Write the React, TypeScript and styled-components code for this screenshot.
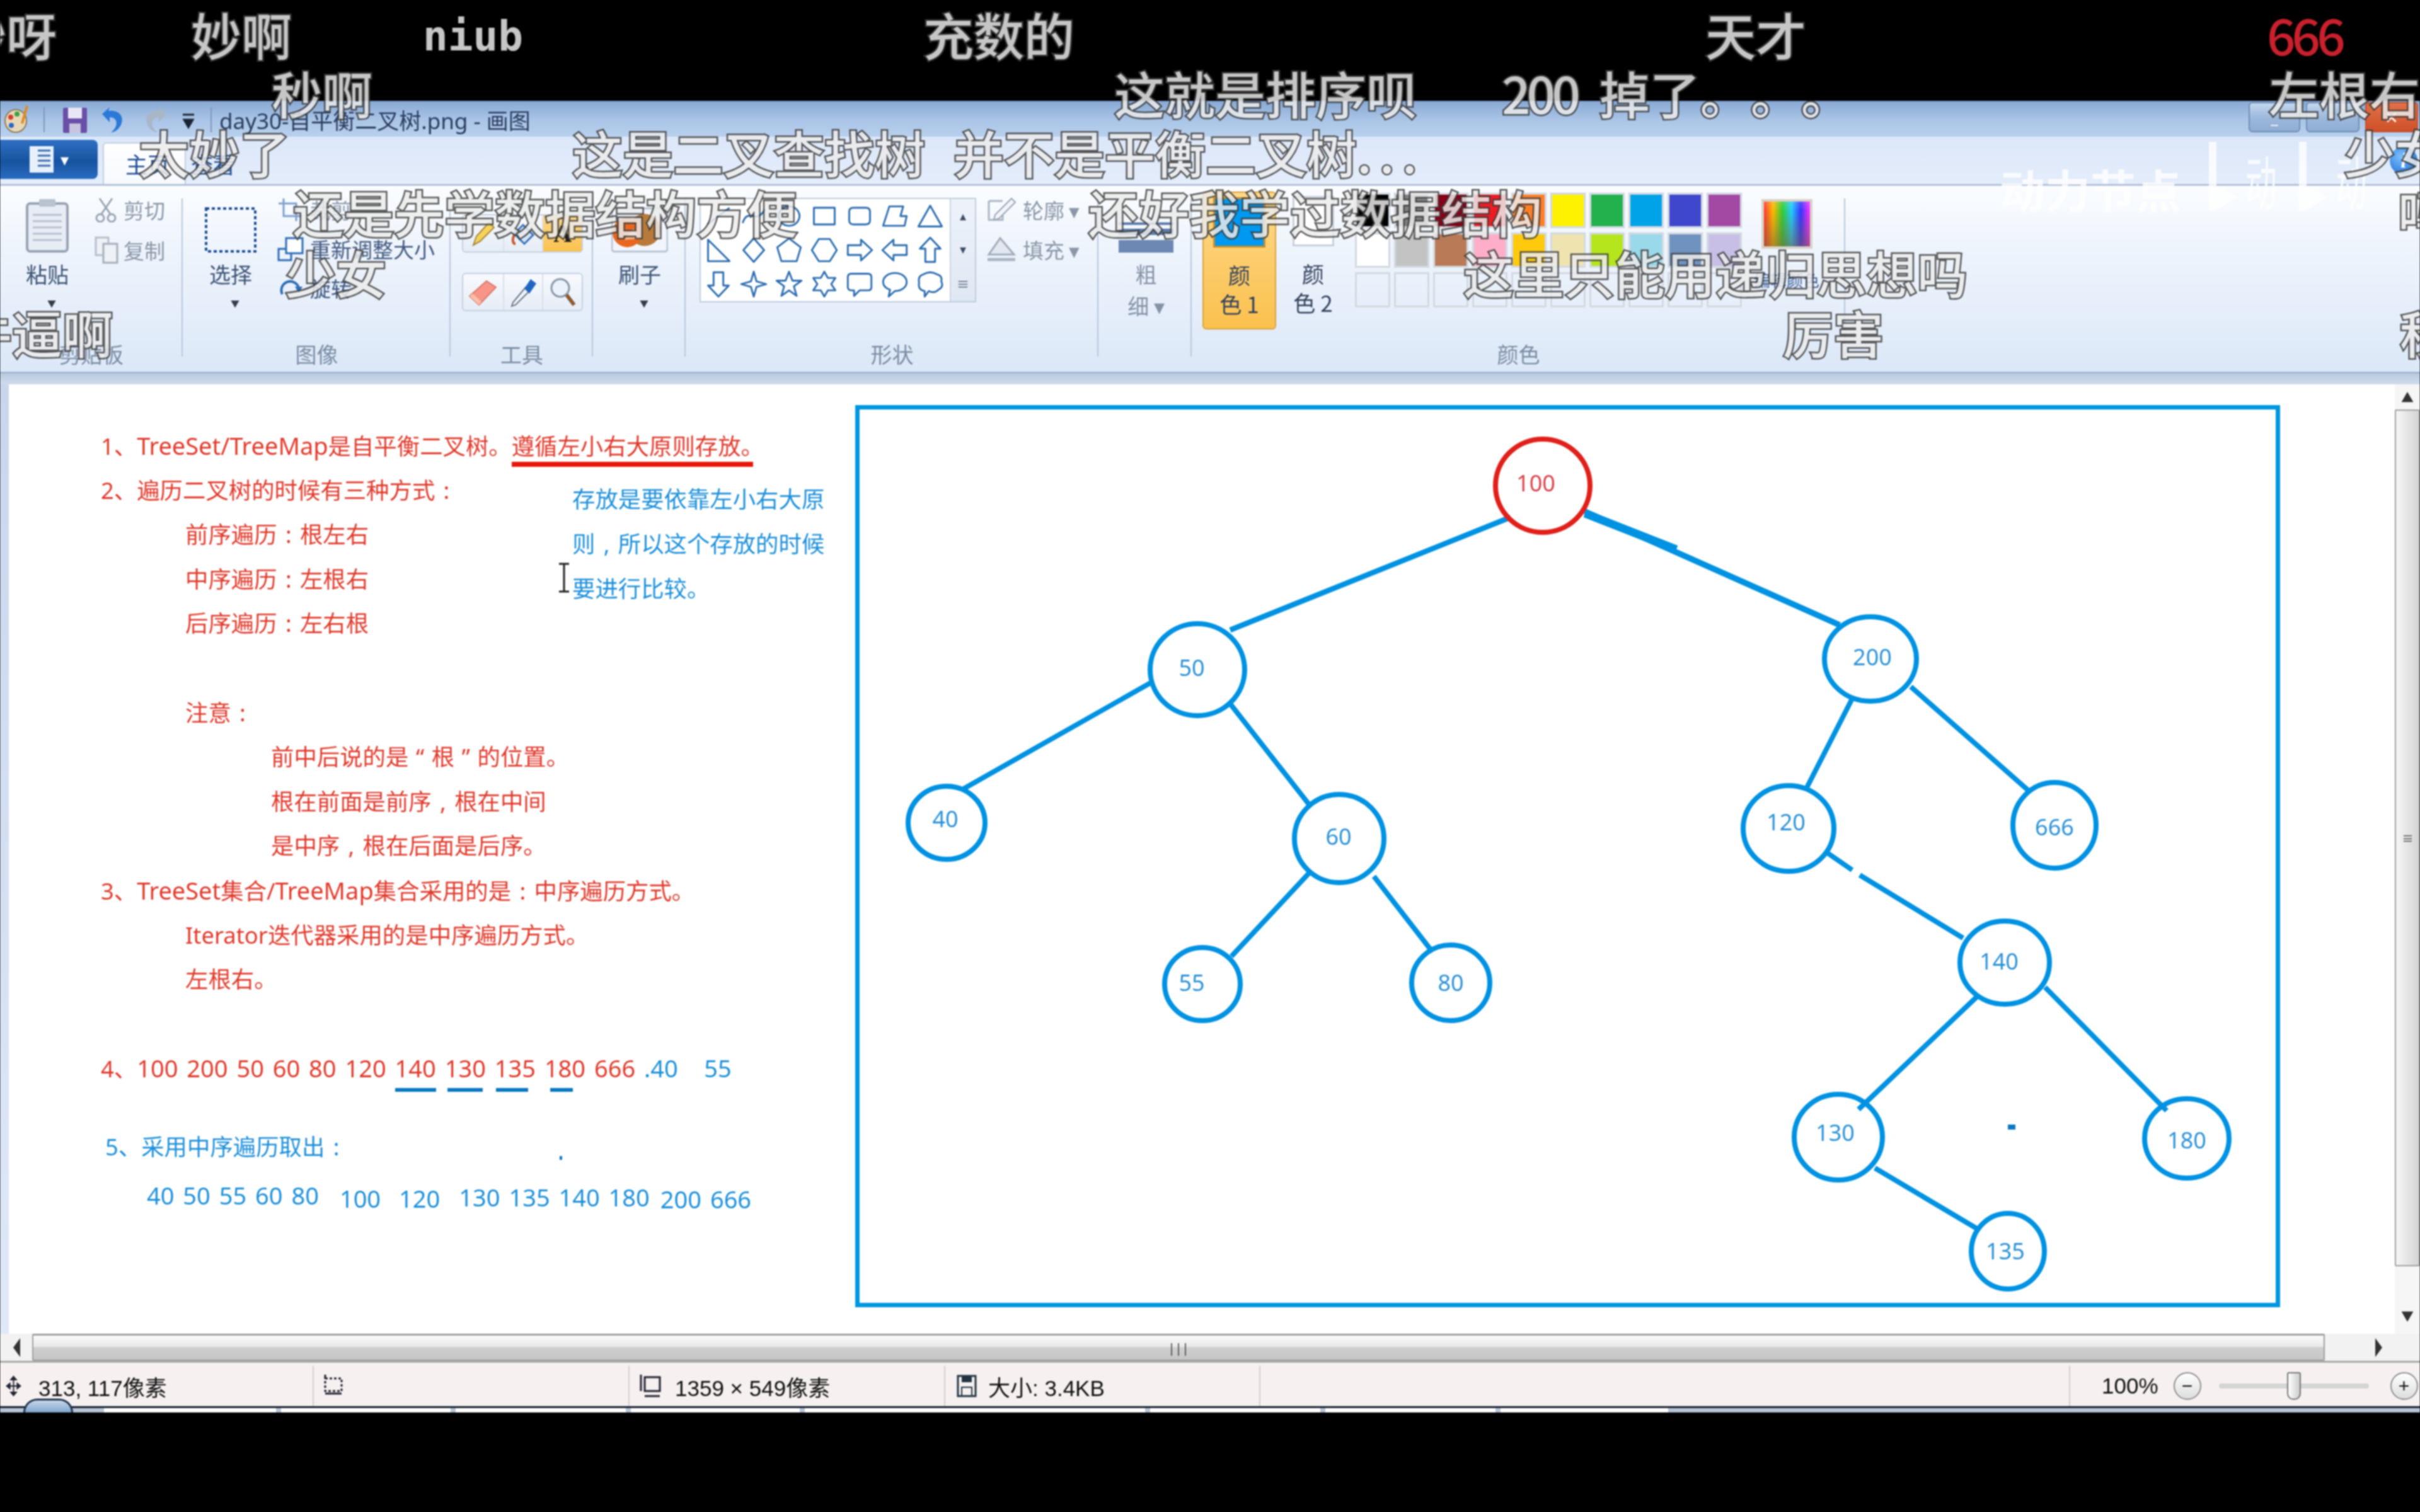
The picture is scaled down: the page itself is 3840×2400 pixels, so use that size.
import React, { ReactNode } from "react";
import styled, { createGlobalStyle } from "styled-components";

const FONT = `"Noto Sans", "Noto Sans CJK SC", sans-serif`;
const CJK = `"Noto Sans CJK SC", sans-serif`;
const BLUE = "#0092e2";
const RED = "#e03a2c";
const NOTE_BLUE = "#1d90da";

const GlobalStyle = createGlobalStyle`
  html, body { margin: 0; padding: 0; background: #000; }
  body { width: 3840px; height: 2400px; overflow: hidden; font-family: ${FONT}; }
`;

const Stage = styled.div`
  position: relative;
  display: flex;
  flex-direction: column;
  width: 3840px;
  height: 2400px;
  overflow: hidden;
  background: #000;
  filter: blur(1.1px);
  text-spacing-trim: space-all;
`;

const TopBand = styled.div`
  height: 160px;
  flex: none;
`;

const Window = styled.div`
  display: flex;
  flex-direction: column;
  flex: none;
`;

/* title bar */
const TitleBar = styled.div`
  display: flex;
  align-items: center;
  height: 57px;
  padding-left: 5px;
  background: linear-gradient(180deg, #8aabd5 0%, #a9c4e6 50%, #b9d1ee 100%);
  border-top: 2px solid #7d9cc6;
  box-sizing: border-box;
`;

const QuickIcon = styled.svg<{ $gap?: number; $width?: number }>`
  flex: none;
  width: ${(p) => p.$width ?? 42}px;
  height: 48px;
  margin-left: ${(p) => p.$gap ?? 0}px;
`;

const TitleDivider = styled.div<{ $gap: number }>`
  width: 2px;
  height: 40px;
  margin-left: ${(p) => p.$gap}px;
  background: #7f97b8;
`;

const TitleText = styled.span`
  margin-left: 12px;
  font-family: ${FONT};
  font-size: 35px;
  color: #2a3d60;
  white-space: nowrap;
`;

const WindowButtons = styled.div`
  display: flex;
  align-self: flex-start;
  gap: 9px;
  margin-left: auto;
  margin-right: 3px;
  margin-top: 0;
`;

const WindowButton = styled.div<{ $width: number; $close?: boolean }>`
  display: flex;
  align-items: center;
  justify-content: center;
  width: ${(p) => p.$width}px;
  height: 48px;
  box-sizing: border-box;
  border: 2px solid ${(p) => (p.$close ? "#c0502e" : "#6f8db5")};
  border-radius: 6px;
  font-size: 26px;
  color: #fff;
  background: ${(p) =>
    p.$close
      ? "linear-gradient(180deg,#e27048,#cf5128)"
      : "linear-gradient(180deg,#c4d8ef,#9db9dc 50%,#8fadd4)"};
`;

/* tab strip */
const TabStrip = styled.div`
  display: flex;
  align-items: flex-end;
  height: 78px;
  background: linear-gradient(180deg, #dce7f9, #e4edfb);
  border-bottom: 3px solid #b4c3d8;
  box-sizing: border-box;
`;

const FileButton = styled.div`
  display: flex;
  align-items: center;
  justify-content: center;
  gap: 10px;
  align-self: flex-start;
  width: 155px;
  height: 62px;
  margin-top: 5px;
  border-radius: 0 8px 8px 0;
  color: #fff;
  font-size: 26px;
  background: linear-gradient(180deg, #2f70c4 0%, #17549f 55%, #2a6cc0 100%);
`;

const HomeTab = styled.div`
  display: flex;
  align-items: center;
  width: 132px;
  height: 66px;
  margin-left: 8px;
  padding-left: 34px;
  box-sizing: border-box;
  border: 2px solid #c3cfdf;
  border-bottom: none;
  border-radius: 6px 6px 0 0;
  background: linear-gradient(180deg, #fff, #f6f9fe);
`;

const TabLabel = styled.span<{ $gap?: number }>`
  margin-left: ${(p) => p.$gap ?? 0}px;
  line-height: 64px;
  font-family: ${CJK};
  font-size: 35px;
  color: #1d4d92;
  white-space: nowrap;
`;

const HelpIcon = styled.div`
  display: flex;
  align-self: center;
  align-items: center;
  justify-content: center;
  width: 44px;
  height: 44px;
  margin-left: auto;
  margin-right: 4px;
  border-radius: 50%;
  background: radial-gradient(circle at 40% 35%, #7cc0ff, #1263d0);
  font-family: "Liberation Serif", serif;
  font-style: italic;
  font-weight: 700;
  font-size: 34px;
  color: #fff;
`;

/* ribbon */
const Ribbon = styled.div`
  display: flex;
  height: 298px;
  box-sizing: border-box;
  background: linear-gradient(180deg, #fbfdff 0%, #eef4fc 35%, #dce8f8 100%);
  border-bottom: 3px solid #a4b7d1;
`;

const RibbonBand = styled.div`
  height: 17px;
  background: linear-gradient(180deg, #bccbdf, #cfdcee);
`;

const Group = styled.div<{ $width: number }>`
  position: relative;
  display: flex;
  flex-direction: column;
  flex: none;
  width: ${(p) => p.$width}px;
  &::after {
    content: "";
    position: absolute;
    top: 20px;
    bottom: 24px;
    right: 0;
    width: 2px;
    background: #b7c7dc;
  }
`;

const GroupBody = styled.div<{ $pad: number }>`
  display: flex;
  align-items: flex-start;
  flex: 1;
  padding-left: ${(p) => p.$pad}px;
  min-height: 0;
`;

const GroupLabel = styled.div`
  height: 40px;
  margin-bottom: 8px;
  line-height: 40px;
  text-align: center;
  font-family: ${CJK};
  font-size: 34px;
  color: #7b8ca3;
`;

const LargeTool = styled.div<{ $width: number }>`
  display: flex;
  flex-direction: column;
  align-items: center;
  flex: none;
  width: ${(p) => p.$width}px;
  padding-top: 20px;
`;

const LargeIcon = styled.div`
  display: flex;
  align-items: flex-end;
  justify-content: center;
  width: 100%;
  height: 86px;
`;

const ToolLabel = styled.div<{ $muted?: boolean; $gap?: number }>`
  margin-top: ${(p) => p.$gap ?? 14}px;
  line-height: 40px;
  white-space: nowrap;
  font-family: ${CJK};
  font-size: 34px;
  color: ${(p) => (p.$muted ? "#8592a6" : "#3b5272")};
`;

const Caret = styled.span`
  margin-top: 18px;
  margin-left: 14px;
  font-size: 14px;
  line-height: 18px;
  color: #333d4c;
`;

const SmallColumn = styled.div<{ $gap: number; $rowGap: number }>`
  display: flex;
  flex-direction: column;
  gap: ${(p) => p.$rowGap}px;
  margin-left: ${(p) => p.$gap}px;
  padding-top: 18px;
`;

const SmallRow = styled.div<{ $muted?: boolean }>`
  display: flex;
  align-items: center;
  gap: 8px;
  height: 40px;
  white-space: nowrap;
  font-family: ${CJK};
  font-size: 33px;
  color: ${(p) => (p.$muted ? "#8a97a8" : "#40577e")};
`;

const ToolButtons = styled.div`
  display: flex;
  flex-direction: column;
  gap: 32px;
  margin-top: 45px;
`;

const ToolRow = styled.div`
  display: grid;
  grid-template-columns: repeat(3, 1fr);
  width: 192px;
  height: 61px;
  box-sizing: border-box;
  border: 2px solid #c4d0e0;
  border-radius: 6px;
  background: linear-gradient(180deg, #f8fafd, #e6edf7);
`;

const ToolCell = styled.div<{ $active?: boolean }>`
  display: flex;
  align-items: center;
  justify-content: center;
  border-left: 2px solid #d8e0ea;
  &:first-child { border-left: none; }
  background: ${(p) => (p.$active ? "linear-gradient(180deg,#fdd78a,#fac24f)" : "transparent")};
  font-family: "Liberation Serif", serif;
  font-weight: 700;
  font-size: 40px;
  color: #1a1a1a;
`;

const Gallery = styled.div`
  display: flex;
  flex: none;
  width: 439px;
  height: 166px;
  margin-top: 19px;
  box-sizing: border-box;
  border: 2px solid #bfccdd;
  background: #fff;
`;

const ShapeGrid = styled.div`
  display: grid;
  grid-template-columns: repeat(7, 56px);
  grid-auto-rows: 54px;
  align-items: center;
  justify-items: center;
  flex: none;
  width: 395px;
`;

const GalleryScroll = styled.div`
  display: flex;
  flex-direction: column;
  align-items: center;
  justify-content: space-around;
  flex: 1;
  background: linear-gradient(180deg, #eef3fa, #dfe8f4);
  border-left: 2px solid #c9d5e5;
  font-size: 20px;
  color: #3d4c62;
`;

const Swatch = styled.div<{ $color: string; $width: number; $edge: string }>`
  flex: none;
  width: ${(p) => p.$width}px;
  height: 80px;
  box-sizing: border-box;
  border: 3px solid ${(p) => p.$edge};
  background: ${(p) => p.$color};
`;

const ColorPick = styled.div<{ $active?: boolean }>`
  display: flex;
  flex-direction: column;
  align-items: center;
  flex: none;
  width: 117px;
  height: 219px;
  margin-top: 9px;
  padding-top: 7px;
  box-sizing: border-box;
  border-radius: 6px;
  ${(p) => p.$active && "background: linear-gradient(180deg,#fdd98a,#fbc14e); border: 2px solid #d9a13f;"}
`;

const PickLabel = styled.div`
  line-height: 46px;
  white-space: nowrap;
  font-family: ${CJK};
  font-size: 35px;
  color: #33415c;
  &:nth-of-type(2) { margin-top: 20px; }
`;

const Palette = styled.div`
  display: grid;
  grid-template-columns: repeat(10, 56px);
  grid-auto-rows: 56px;
  gap: 7px 6px;
  flex: none;
  margin-left: 8px;
  margin-top: 11px;
`;

const PaletteCell = styled.div<{ $color?: string }>`
  box-sizing: border-box;
  border: 3px solid #d3d9e2;
  outline: 1px solid #eef2f8;
  background: ${(p) => p.$color ?? "transparent"};
`;

const EditColors = styled.div`
  display: flex;
  flex-direction: column;
  align-items: center;
  flex: none;
  width: 110px;
  margin-left: 16px;
  margin-top: 21px;
`;

const Rainbow = styled.div`
  width: 81px;
  height: 79px;
  box-sizing: border-box;
  border: 4px solid #d9d2c8;
  background: linear-gradient(180deg, rgba(255, 255, 255, 0.15), rgba(255, 255, 255, 0) 20%, rgba(120, 90, 60, 0.55) 100%),
    linear-gradient(90deg, #f33, #fb0, #3c3, #2cf, #33f, #f3f);
`;

const EditLabel = styled.div`
  margin-top: 32px;
  line-height: 34px;
  font-family: ${CJK};
  font-size: 26px;
  color: #3a5c96;
  white-space: nowrap;
`;

const WatermarkBox = styled.div`
  display: flex;
  align-items: flex-end;
  flex: none;
  gap: 40px;
  margin-left: 245px;
  margin-top: -70px;
  height: 118px;
  opacity: 0.8;
`;

const WatermarkText = styled.span`
  margin-bottom: 8px;
  font-family: ${CJK};
  font-weight: 700;
  font-size: 72px;
  line-height: 1;
  color: #fff;
  white-space: nowrap;
`;

/* canvas */
const Workspace = styled.div`
  position: relative;
  display: flex;
  height: 1507px;
`;

const LeftEdge = styled.div`
  flex: none;
  width: 14px;
  background: linear-gradient(180deg, #c9d6ec, #dfe9f8);
`;

const Picture = styled.div`
  display: flex;
  flex: 1;
  background: #fff;
`;

const Notes = styled.div`
  flex: none;
  width: 1343px;
  padding: 62px 0 0 146px;
  box-sizing: border-box;
  font-family: ${FONT};
  font-size: 36.4px;
  line-height: 70.6px;
`;

const NoteLine = styled.div<{ $indent?: number; $color?: string; $top?: number }>`
  height: 70.6px;
  margin-left: ${(p) => p.$indent ?? 0}px;
  margin-top: ${(p) => p.$top ?? 0}px;
  white-space: pre;
  color: ${(p) => p.$color ?? RED};
`;

const Latin = styled.span`
  font-size: 38px;
`;

const Numbers = styled.span`
  font-size: 38px;
  word-spacing: 4px;
`;

const Punct = styled.span`
  display: inline-block;
  width: 1em;
  text-align: center;
`;

const Inked = styled.span`
  position: relative;
  &::after {
    content: "";
    position: absolute;
    left: 0;
    right: 17px;
    top: 50px;
    height: 8px;
    background: #e8180c;
  }
`;

const BlueText = styled.span`
  color: ${NOTE_BLUE};
`;

const Marked = styled.span<{ $l: number; $r: number }>`
  position: relative;
  &::after {
    content: "";
    position: absolute;
    left: ${(p) => p.$l}px;
    right: ${(p) => p.$r}px;
    top: 58px;
    height: 6px;
    background: #0a78c4;
  }
`;

const SortedRow = styled.div`
  display: flex;
  align-items: flex-start;
  height: 71px;
  margin-top: 6px;
  margin-left: 73px;
  color: ${NOTE_BLUE};
  white-space: pre;
  font-size: 38px;
  word-spacing: 4px;
`;

const SortedPart = styled.span<{ $gap: number; $top: number }>`
  margin-left: ${(p) => p.$gap}px;
  margin-top: ${(p) => p.$top}px;
`;

const SideNote = styled.div`
  position: absolute;
  left: 908px;
  top: 147px;
  width: 420px;
  font-family: ${FONT};
  font-size: 36.4px;
  line-height: 71px;
  color: ${NOTE_BLUE};
  white-space: nowrap;
`;

const Cursor = styled.svg`
  position: absolute;
  left: 883px;
  top: 283px;
  width: 24px;
  height: 48px;
`;

const Speck = styled.div`
  position: absolute;
  left: 888px;
  top: 1225px;
  width: 4px;
  height: 6px;
  background: #0a78c4;
`;

const DiagramFrame = styled.div`
  flex: none;
  width: 2261px;
  height: 1432px;
  margin-top: 33px;
  box-sizing: border-box;
  border: 7px solid #0096e0;
`;

const DiagramSvg = styled.svg`
  display: block;
  width: 2247px;
  height: 1418px;
`;

const GapFill = styled.div`
  flex: 1;
`;

/* scrollbars */
const VScroll = styled.div`
  display: flex;
  flex-direction: column;
  align-items: center;
  flex: none;
  width: 40px;
  background: #f6f6f6;
  color: #333;
  font-size: 20px;
`;

const VArrow = styled.div<{ $height: number; $end?: boolean }>`
  display: flex;
  align-items: ${(p) => (p.$end ? "flex-end" : "center")};
  justify-content: center;
  width: 100%;
  height: ${(p) => p.$height}px;
  padding-bottom: ${(p) => (p.$end ? 14 : 0)}px;
  box-sizing: border-box;
`;

const VThumb = styled.div`
  display: flex;
  align-items: center;
  justify-content: center;
  width: 100%;
  height: 1360px;
  box-sizing: border-box;
  border: 2px solid #a0a0a0;
  border-radius: 2px;
  background: linear-gradient(90deg, #f6f6f6, #d4d4d4);
  font-size: 18px;
  letter-spacing: -1px;
`;

const HScroll = styled.div`
  display: flex;
  align-items: center;
  height: 46px;
  background: #f2f2f2;
  border-bottom: 3px solid #a9a9a9;
  box-sizing: border-box;
  color: #333;
`;

const HArrow = styled.div<{ $width: number; $pad?: number }>`
  display: flex;
  align-items: center;
  justify-content: center;
  flex: none;
  width: ${(p) => p.$width}px;
  padding-left: ${(p) => p.$pad ?? 0}px;
  box-sizing: border-box;
`;

const HThumb = styled.div`
  display: flex;
  align-items: center;
  justify-content: center;
  flex: none;
  width: 3638px;
  height: 100%;
  box-sizing: border-box;
  border: 2px solid #a0a0a0;
  border-top-width: 3px;
  border-radius: 2px;
  background: linear-gradient(180deg, #fbfbfb 0%, #eaeaea 45%, #cfcfcf 50%, #c6c6c6 100%);
  font-size: 20px;
`;

/* status bar */
const StatusBar = styled.div`
  display: flex;
  height: 69px;
  padding-top: 5px;
  box-sizing: border-box;
  background: #f6f1f0;
  font-family: "Liberation Sans", "Noto Sans CJK SC", sans-serif;
  font-size: 35px;
  color: #111;
`;

const StatusCell = styled.div<{ $width: number; $open?: boolean; $pad?: number; $gap?: number }>`
  display: flex;
  align-items: center;
  gap: ${(p) => p.$gap ?? 22}px;
  flex: none;
  width: ${(p) => p.$width}px;
  padding-left: ${(p) => p.$pad ?? 9}px;
  box-sizing: border-box;
  white-space: nowrap;
  border-right: ${(p) => (p.$open ? "none" : "2px solid #d3cfcf")};
`;

const StatusIcon = styled.svg<{ $width?: number }>`
  flex: none;
  width: ${(p) => p.$width ?? 36}px;
  height: 40px;
`;

const ZoomRound = styled.div<{ $gap: number }>`
  display: flex;
  align-items: center;
  justify-content: center;
  flex: none;
  width: 44px;
  height: 44px;
  margin-left: ${(p) => p.$gap}px;
  box-sizing: border-box;
  border: 2px solid #8e8e8e;
  border-radius: 50%;
  font-size: 30px;
  background: linear-gradient(180deg, #fff, #ddd);
`;

const ZoomTrack = styled.div`
  display: flex;
  align-items: center;
  justify-content: center;
  flex: none;
  width: 238px;
  height: 8px;
  margin-left: 28px;
  background: #d5d5d5;
  border-radius: 4px;
`;

const ZoomThumb = styled.div`
  width: 22px;
  height: 44px;
  box-sizing: border-box;
  border: 2px solid #777;
  border-radius: 3px 3px 10px 10px;
  background: linear-gradient(90deg, #fff, #ccc);
`;

/* taskbar sliver */
const Taskbar = styled.div`
  display: flex;
  flex: none;
  height: 10px;
  padding-left: 165px;
  box-sizing: border-box;
  border-top: 3px solid #15202e;
  background: #b6c4d6;
`;

const TaskSlot = styled.div<{ $width: number }>`
  flex: none;
  width: ${(p) => p.$width}px;
  margin-right: 8px;
  background: #fff;
`;

const Orb = styled.div`
  position: absolute;
  left: 37px;
  top: 2220px;
  width: 79px;
  height: 22px;
  border-radius: 40px 40px 0 0;
  border: 3px solid #20344f;
  border-bottom: none;
  box-sizing: border-box;
  background: linear-gradient(180deg, #c8d8ea, #7fa4cc);
`;

const CutOff = styled.div`
  flex: 1;
  background: #000;
`;

/* bullet comments */
const DanmakuLayer = styled.div`
  position: absolute;
  inset: 0;
  pointer-events: none;
`;

const Danmaku = styled.span<{ $x: number; $y: number; $red?: boolean; $mono?: boolean; $word?: number }>`
  position: absolute;
  left: ${(p) => p.$x}px;
  top: ${(p) => p.$y - (p.$mono ? 50 : 55)}px;
  height: 100px;
  line-height: 100px;
  white-space: pre;
  font-family: ${(p) => (p.$mono ? `"DejaVu Sans Mono", monospace` : CJK)};
  font-size: ${(p) => (p.$mono ? 66 : 80)}px;
  font-weight: ${(p) => (p.$mono ? 700 : 500)};
  word-spacing: ${(p) => p.$word ?? 0}px;
  color: ${(p) => (p.$red ? "#c8202c" : "#ececec")};
  opacity: ${(p) => (p.$red ? 1 : 0.84)};
  -webkit-text-stroke: ${(p) => (p.$red || p.$mono ? "0" : "5px #3c3c3c")};
  paint-order: stroke fill;
`;

const Narrow = styled.span<{ $spacing: number }>`
  letter-spacing: ${(p) => p.$spacing}px;
`;

const Dots = styled.span`
  letter-spacing: 12px;
`;

const SHAPE_PATHS: string[] = [
  "M4 32 L36 8",
  "M4 30 C12 6 24 34 36 10",
  "M20 6 A15 14 0 1 0 20.1 6 Z",
  "M5 8 H35 V32 H5 Z",
  "M11 8 H29 Q35 8 35 14 V26 Q35 32 29 32 H11 Q5 32 5 26 V14 Q5 8 11 8 Z",
  "M12 6 H32 L28 20 L37 20 L34 34 H3 Z",
  "M20 5 L37 35 H3 Z",
  "M5 5 L36 36 H5 Z",
  "M20 3 L35 20 L20 37 L5 20 Z",
  "M20 3 L37 16 L31 36 H9 L3 16 Z",
  "M12 4 H28 L38 20 L28 36 H12 L2 20 Z",
  "M3 13 H22 V5 L38 20 L22 35 V27 H3 Z",
  "M37 13 H18 V5 L2 20 L18 35 V27 H37 Z",
  "M13 37 V18 H5 L20 2 L35 18 H27 V37 Z",
  "M13 3 V22 H5 L20 38 L35 22 H27 V3 Z",
  "M20 2 L24 16 L38 20 L24 24 L20 38 L16 24 L2 20 L16 16 Z",
  "M20 2 L25 15 L38 15 L27 23 L31 37 L20 29 L9 37 L13 23 L2 15 L15 15 Z",
  "M20 2 L25 11 L36 11 L30 20 L36 29 L25 29 L20 38 L15 29 L4 29 L10 20 L4 11 L15 11 Z",
  "M8 5 H32 Q37 5 37 10 V24 Q37 29 32 29 H20 L12 37 V29 H8 Q3 29 3 24 V10 Q3 5 8 5 Z",
  "M20 4 C30 4 37 10 37 17 C37 24 30 30 20 30 L11 38 L13 28 C7 26 3 22 3 17 C3 10 10 4 20 4 Z",
  "M10 6 Q20 0 30 6 Q38 8 36 16 Q40 24 32 28 Q26 34 18 30 L12 38 L12 30 Q2 28 4 18 Q2 8 10 6 Z",
];

const PALETTE = [
  "#000000", "#7f7f7f", "#880015", "#ed1c24", "#ff7f27", "#fff200", "#22b14c", "#00a2e8", "#3f48cc", "#a349a4",
  "#ffffff", "#c3c3c3", "#b97a57", "#ffaec9", "#ffc90e", "#efe4b0", "#b5e61d", "#99d9ea", "#7092be", "#c8bfe7",
];

type Node = { label: string; x: number; y: number; rx: number; ry: number; tx: number; ty: number; red?: boolean };

const NODES: Node[] = [
  { label: "100", x: 2448, y: 771, rx: 75, ry: 74, tx: 2437, ty: 767, red: true },
  { label: "50", x: 1900, y: 1063, rx: 75, ry: 73, tx: 1891, ty: 1060 },
  { label: "40", x: 1502, y: 1306, rx: 61, ry: 58, tx: 1500, ty: 1300 },
  { label: "60", x: 2125, y: 1331, rx: 71, ry: 70, tx: 2124, ty: 1328 },
  { label: "55", x: 1908, y: 1562, rx: 60, ry: 58, tx: 1891, ty: 1560 },
  { label: "80", x: 2302, y: 1560, rx: 62, ry: 60, tx: 2302, ty: 1560 },
  { label: "200", x: 2968, y: 1046, rx: 73, ry: 67, tx: 2971, ty: 1043 },
  { label: "120", x: 2838, y: 1315, rx: 72, ry: 68, tx: 2834, ty: 1305 },
  { label: "666", x: 3260, y: 1310, rx: 66, ry: 68, tx: 3260, ty: 1313 },
  { label: "140", x: 3181, y: 1528, rx: 71, ry: 66, tx: 3172, ty: 1526 },
  { label: "130", x: 2917, y: 1805, rx: 70, ry: 68, tx: 2912, ty: 1798 },
  { label: "180", x: 3470, y: 1807, rx: 67, ry: 63, tx: 3470, ty: 1810 },
  { label: "135", x: 3186, y: 1986, rx: 58, ry: 60, tx: 3182, ty: 1986 },
];

const EDGES: [number, number, number, number, number?][] = [
  [2397, 821, 1952, 1000, 8.5],
  [2515, 812, 2919, 992, 9.5],
  [2515, 815, 2660, 872, 13],
  [1829, 1082, 1529, 1252],
  [1952, 1117, 2078, 1278],
  [2077, 1386, 1954, 1518],
  [2180, 1391, 2273, 1511],
  [2939, 1109, 2865, 1254],
  [3032, 1090, 3220, 1256],
  [2897, 1352, 2939, 1381],
  [2951, 1389, 3115, 1489],
  [3137, 1582, 2949, 1761],
  [3245, 1567, 3438, 1763],
  [2975, 1854, 3140, 1952],
];

function Ic({ w, h, children }: { w: number; h: number; children: ReactNode }) {
  return (
    <svg width={w} height={h} viewBox={`0 0 ${w} ${h}`} fill="none">
      {children}
    </svg>
  );
}

function ClipboardGroup() {
  return (
    <Group $width={290}>
      <GroupBody $pad={35}>
        <LargeTool $width={80}>
          <LargeIcon>
            <Ic w={70} h={86}>
              <rect x="3" y="8" width="64" height="76" rx="5" fill="#e8edf5" stroke="#98a3b4" strokeWidth="4" />
              <rect x="22" y="1" width="26" height="12" rx="2" fill="#b9c2cf" />
              <path d="M12 26H58M12 36H58M12 46H58M12 56H58M12 66H58" stroke="#b7c0cf" strokeWidth="3" />
            </Ic>
          </LargeIcon>
          <ToolLabel>粘贴</ToolLabel>
          <Caret>▼</Caret>
        </LargeTool>
        <SmallColumn $gap={35} $rowGap={24}>
          <SmallRow $muted>
            <Ic w={38} h={40}>
              <path d="M8 2L26 28M28 2L10 28" stroke="#9aa5b4" strokeWidth="3" />
              <circle cx="9" cy="33" r="6" stroke="#9aa5b4" strokeWidth="3" />
              <circle cx="27" cy="33" r="6" stroke="#9aa5b4" strokeWidth="3" />
            </Ic>
            剪切
          </SmallRow>
          <SmallRow $muted>
            <Ic w={38} h={44}>
              <rect x="2" y="2" width="20" height="28" fill="#eef1f6" stroke="#b6bfcc" strokeWidth="3" />
              <rect x="14" y="12" width="22" height="30" fill="#eef1f6" stroke="#a6b0be" strokeWidth="3" />
            </Ic>
            复制
          </SmallRow>
        </SmallColumn>
      </GroupBody>
      <GroupLabel>剪贴板</GroupLabel>
    </Group>
  );
}

function ImageGroup() {
  return (
    <Group $width={425}>
      <GroupBody $pad={35}>
        <LargeTool $width={82}>
          <LargeIcon>
            <Ic w={82} h={72}>
              <rect x="2" y="2" width="78" height="68" stroke="#1f4f96" strokeWidth="4" strokeDasharray="5 4" />
            </Ic>
          </LargeIcon>
          <ToolLabel>选择</ToolLabel>
          <Caret>▼</Caret>
        </LargeTool>
        <SmallColumn $gap={33} $rowGap={22}>
          <SmallRow $muted>
            <Ic w={44} h={40}>
              <path d="M10 2V30H40M2 10H30V38" stroke="#7ea0cc" strokeWidth="3" />
            </Ic>
            裁剪
          </SmallRow>
          <SmallRow>
            <Ic w={44} h={40}>
              <rect x="2" y="20" width="20" height="18" stroke="#2f6db5" strokeWidth="3" />
              <rect x="14" y="3" width="26" height="24" stroke="#2f6db5" strokeWidth="3" fill="#fff" />
            </Ic>
            重新调整大小
          </SmallRow>
          <SmallRow>
            <Ic w={44} h={40}>
              <path d="M8 30A14 14 0 1 1 34 20" stroke="#2f6db5" strokeWidth="4" />
              <path d="M28 18H40L34 28Z" fill="#2f6db5" />
            </Ic>
            旋转
          </SmallRow>
        </SmallColumn>
      </GroupBody>
      <GroupLabel>图像</GroupLabel>
    </Group>
  );
}

function ToolsGroup() {
  return (
    <Group $width={226}>
      <GroupBody $pad={18}>
        <ToolButtons>
          <ToolRow>
            <ToolCell>
              <Ic w={40} h={44}>
                <path d="M5 40L10 26L30 4L38 12L16 34Z" fill="#f5d25c" stroke="#a8853a" strokeWidth="2" />
              </Ic>
            </ToolCell>
            <ToolCell>
              <Ic w={40} h={44}>
                <path d="M20 8L36 24L22 38L6 22Z" fill="#d7e6f7" stroke="#3a73b7" strokeWidth="3" />
                <path d="M6 24C2 32 4 38 8 38" stroke="#c65a30" strokeWidth="4" />
              </Ic>
            </ToolCell>
            <ToolCell $active>A</ToolCell>
          </ToolRow>
          <ToolRow>
            <ToolCell>
              <Ic w={48} h={44}>
                <path d="M3 28L30 4L45 14L18 42Z" fill="#f99488" stroke="#d9786a" strokeWidth="2" />
                <path d="M3 28L18 42L22 37L8 24Z" fill="#f7c0a8" />
              </Ic>
            </ToolCell>
            <ToolCell>
              <Ic w={44} h={48}>
                <path d="M26 16L6 40L4 46L10 44L32 22Z" fill="#f0f4fa" stroke="#6b7688" strokeWidth="2" />
                <path d="M24 18L34 3L43 10L32 26Z" fill="#1f66c0" />
              </Ic>
            </ToolCell>
            <ToolCell>
              <Ic w={44} h={48}>
                <circle cx="18" cy="17" r="14" fill="#eaf2fb" stroke="#8a97a8" strokeWidth="3" />
                <path d="M28 28L40 44" stroke="#8c5a34" strokeWidth="6" />
              </Ic>
            </ToolCell>
          </ToolRow>
        </ToolButtons>
      </GroupBody>
      <GroupLabel>工具</GroupLabel>
    </Group>
  );
}

function BrushGroup() {
  return (
    <Group $width={147}>
      <GroupBody $pad={29}>
        <LargeTool $width={90}>
          <LargeIcon>
            <Ic w={92} h={72}>
              <rect x="1" y="1" width="90" height="70" rx="4" fill="#f2f6fc" stroke="#b8c4d4" strokeWidth="3" />
              <circle cx="54" cy="36" r="26" fill="#b87a3a" />
              <circle cx="26" cy="40" r="24" fill="#e8661e" />
              <path d="M20 52L36 34L46 50Z" fill="#f6b48a" />
            </Ic>
          </LargeIcon>
          <ToolLabel>刷子</ToolLabel>
          <Caret>▼</Caret>
        </LargeTool>
      </GroupBody>
      <GroupLabel />
    </Group>
  );
}

function ShapesGroup() {
  return (
    <Group $width={655}>
      <GroupBody $pad={22}>
        <Gallery>
          <ShapeGrid>
            {SHAPE_PATHS.map((d, i) => (
              <svg key={i} width="44" height="44" viewBox="0 0 40 40" fill="none">
                <path d={d} stroke="#2c6db0" strokeWidth="2.6" strokeLinejoin="round" />
              </svg>
            ))}
          </ShapeGrid>
          <GalleryScroll>
            <span>▴</span>
            <span>▾</span>
            <span>≡</span>
          </GalleryScroll>
        </Gallery>
        <SmallColumn $gap={16} $rowGap={23}>
          <SmallRow $muted>
            <Ic w={50} h={40}>
              <path d="M4 6H26M4 6V36H26V24" stroke="#aab5c4" strokeWidth="3" />
              <path d="M14 28L40 2L46 8L20 34L12 36Z" fill="#f2f5fa" stroke="#9aa5b4" strokeWidth="2" />
            </Ic>
            轮廓 ▾
          </SmallRow>
          <SmallRow $muted>
            <Ic w={50} h={44}>
              <path d="M22 4L44 30H4Z" fill="#e3e8f0" stroke="#a2adbc" strokeWidth="3" />
              <path d="M2 38H46" stroke="#aab5c4" strokeWidth="5" />
            </Ic>
            填充 ▾
          </SmallRow>
        </SmallColumn>
      </GroupBody>
      <GroupLabel>形状</GroupLabel>
    </Group>
  );
}

function SizeGroup() {
  return (
    <Group $width={148}>
      <GroupBody $pad={32}>
        <LargeTool $width={87}>
          <LargeIcon>
            <Ic w={87} h={48}>
              <rect x="0" y="0" width="87" height="4" fill="#5e7cab" />
              <rect x="0" y="10" width="87" height="10" fill="#5e7cab" />
              <rect x="0" y="28" width="87" height="20" fill="#6d88b3" />
            </Ic>
          </LargeIcon>
          <ToolLabel $muted>粗</ToolLabel>
          <ToolLabel $muted $gap={10}>
            细 ▾
          </ToolLabel>
        </LargeTool>
      </GroupBody>
      <GroupLabel />
    </Group>
  );
}

function ColorsGroup() {
  return (
    <Group $width={1037}>
      <GroupBody $pad={17}>
        <ColorPick $active>
          <Swatch $color="#0098f0" $width={83} $edge="#c88c2c" />
          <PickLabel>颜</PickLabel>
          <PickLabel>色 1</PickLabel>
        </ColorPick>
        <ColorPick>
          <Swatch $color="#ffffff" $width={66} $edge="#c8d0dc" />
          <PickLabel>颜</PickLabel>
          <PickLabel>色 2</PickLabel>
        </ColorPick>
        <Palette>
          {PALETTE.map((c) => (
            <PaletteCell key={c} $color={c} />
          ))}
          {Array.from({ length: 10 }).map((_, i) => (
            <PaletteCell key={i} />
          ))}
        </Palette>
        <EditColors>
          <Rainbow />
          <EditLabel>编辑颜色</EditLabel>
        </EditColors>
      </GroupBody>
      <GroupLabel>颜色</GroupLabel>
    </Group>
  );
}

function Notebook() {
  return (
    <Notes>
      <NoteLine>
        1、<Latin>TreeSet/TreeMap</Latin>是自平衡二叉树。<Inked>遵循左小右大原则存放。</Inked>
      </NoteLine>
      <NoteLine>2、遍历二叉树的时候有三种方式<Punct>:</Punct></NoteLine>
      <NoteLine $indent={134}>前序遍历<Punct>:</Punct>根左右</NoteLine>
      <NoteLine $indent={134}>中序遍历<Punct>:</Punct>左根右</NoteLine>
      <NoteLine $indent={134}>后序遍历<Punct>:</Punct>左右根</NoteLine>
      <NoteLine />
      <NoteLine $indent={134}>注意<Punct>:</Punct></NoteLine>
      <NoteLine $indent={270}>前中后说的是<Punct>“</Punct>根<Punct>”</Punct>的位置。</NoteLine>
      <NoteLine $indent={270}>根在前面是前序<Punct>,</Punct>根在中间</NoteLine>
      <NoteLine $indent={270}>是中序<Punct>,</Punct>根在后面是后序。</NoteLine>
      <NoteLine>
        3、<Latin>TreeSet</Latin>集合/<Latin>TreeMap</Latin>集合采用的是<Punct>:</Punct>中序遍历方式。
      </NoteLine>
      <NoteLine $indent={134}>Iterator迭代器采用的是中序遍历方式。</NoteLine>
      <NoteLine $indent={134}>左根右。</NoteLine>
      <NoteLine />
      <NoteLine>
        4、<Numbers>100 200 50 60 80 120 <Marked $l={0} $r={0}>140</Marked> <Marked $l={4} $r={5}>130</Marked>{" "}
        <Marked $l={2} $r={12}>135</Marked> <Marked $l={9} $r={20}>180</Marked> 666 <BlueText>.40   55</BlueText></Numbers>
      </NoteLine>
      <NoteLine $color={NOTE_BLUE} $top={54} $indent={7}>
        5、采用中序遍历取出<Punct>:</Punct>
      </NoteLine>
      <SortedRow>
        <SortedPart $gap={0} $top={0}>40 50 55 60 80</SortedPart>
        <SortedPart $gap={33} $top={5}>100</SortedPart>
        <SortedPart $gap={29} $top={5}>120</SortedPart>
        <SortedPart $gap={30} $top={3}>130 135 140 180</SortedPart>
        <SortedPart $gap={17} $top={6}>200 666</SortedPart>
      </SortedRow>
    </Notes>
  );
}

function Diagram() {
  return (
    <DiagramFrame>
      <DiagramSvg viewBox="1364 650 2247 1418">
        {EDGES.map(([x1, y1, x2, y2, w], i) => (
          <line key={i} x1={x1} y1={y1} x2={x2} y2={y2} stroke={BLUE} strokeWidth={w ?? 8} />
        ))}
        {NODES.map((n) => (
          <g key={n.label}>
            <ellipse cx={n.x} cy={n.y} rx={n.rx} ry={n.ry} fill="none" stroke={n.red ? "#e0201a" : BLUE} strokeWidth={8} />
            <text
              x={n.tx}
              y={n.ty + 13}
              textAnchor="middle"
              fontFamily={`"Noto Sans", sans-serif`}
              fontSize="36"
              fill={n.red ? "#d8404a" : "#2c92d6"}
            >
              {n.label}
            </text>
          </g>
        ))}
        <rect x="3186" y="1785" width="12" height="8" fill="#0a78c4" />
      </DiagramSvg>
    </DiagramFrame>
  );
}

export default function App() {
  return (
    <Stage>
      <GlobalStyle />
      <TopBand />
      <Window>
        <TitleBar>
          <QuickIcon viewBox="0 0 42 48">
            <ellipse cx="20" cy="26" rx="17" ry="18" fill="#e8d8b8" stroke="#8a7a5a" strokeWidth="2" />
            <circle cx="12" cy="20" r="4" fill="#d83a2a" />
            <circle cx="22" cy="15" r="4" fill="#3aa040" />
            <circle cx="13" cy="33" r="4" fill="#2a66c8" />
            <path d="M30 30L38 2" stroke="#e08a20" strokeWidth="4" />
          </QuickIcon>
          <TitleDivider $gap={22} />
          <QuickIcon $gap={27} viewBox="0 0 42 48">
            <rect x="2" y="5" width="38" height="40" rx="2" fill="#6a4fa8" />
            <rect x="10" y="5" width="22" height="17" fill="#e9e7f5" />
            <rect x="12" y="30" width="18" height="15" fill="#c9c4de" />
          </QuickIcon>
          <QuickIcon $gap={20} viewBox="0 0 42 48">
            <path d="M12 10C28 8 38 18 32 32C28 40 22 44 16 44C28 36 28 20 14 20L14 28L2 15L14 4Z" fill="#2a78d8" />
          </QuickIcon>
          <QuickIcon $gap={22} viewBox="0 0 42 48">
            <path d="M30 10C14 8 4 18 10 32C14 40 20 44 26 44C14 36 14 20 28 20L28 28L40 15L28 4Z" fill="#a9b6c6" />
          </QuickIcon>
          <QuickIcon $gap={18} $width={30} viewBox="0 0 30 48">
            <path d="M6 16H24M8 24H22L15 36Z" stroke="#1b2433" strokeWidth="3" fill="#1b2433" />
          </QuickIcon>
          <TitleDivider $gap={20} />
          <TitleText>day30-自平衡二叉树.png - 画图</TitleText>
          <WindowButtons>
            <WindowButton $width={82}>_</WindowButton>
            <WindowButton $width={85}>▫</WindowButton>
            <WindowButton $width={84} $close>
              ✕
            </WindowButton>
          </WindowButtons>
        </TitleBar>
        <TabStrip>
          <FileButton>
            <Ic w={40} h={44}>
              <rect x="1" y="1" width="38" height="42" fill="#e8f0fb" />
              <path d="M14 8H34M14 16H34M14 24H34M14 32H34" stroke="#3a6cad" strokeWidth="3" />
            </Ic>
            ▾
          </FileButton>
          <HomeTab>
            <TabLabel>主页</TabLabel>
          </HomeTab>
          <TabLabel $gap={8}>查看</TabLabel>
          <HelpIcon>i</HelpIcon>
        </TabStrip>
        <Ribbon>
          <ClipboardGroup />
          <ImageGroup />
          <ToolsGroup />
          <BrushGroup />
          <ShapesGroup />
          <SizeGroup />
          <ColorsGroup />
          <WatermarkBox>
            <WatermarkText>动力节点</WatermarkText>
            <svg width="270" height="118" viewBox="0 0 270 118" fill="none">
              <path d="M10 0V110M153 0V110" stroke="#fff" strokeWidth="12" />
              <path d="M16 70L50 88L16 108Z M159 70L193 88L159 108Z" fill="#fff" />
              <g fontFamily={CJK} fontSize="62" fill="#fff">
                <text transform="translate(62 100) scale(0.8 1.5)">动</text>
                <text transform="translate(205 100) scale(0.8 1.5)">动</text>
              </g>
            </svg>
          </WatermarkBox>
        </Ribbon>
        <RibbonBand />
        <Workspace>
          <LeftEdge />
          <Picture>
            <Notebook />
            <Diagram />
            <GapFill />
          </Picture>
          <VScroll>
            <VArrow $height={40}>▲</VArrow>
            <VThumb>≡</VThumb>
            <VArrow $height={107} $end>▼</VArrow>
          </VScroll>
          <SideNote>
            <div>存放是要依靠左小右大原</div>
            <div>则<Punct>,</Punct>所以这个存放的时候</div>
            <div>要进行比较。</div>
          </SideNote>
          <Cursor viewBox="0 0 24 48" fill="none">
            <path d="M4 2H20M4 46H20M12 2V46" stroke="#222" strokeWidth="3" />
          </Cursor>
          <Speck />
        </Workspace>
        <HScroll>
          <HArrow $width={51}>
            <Ic w={12} h={30}>
              <path d="M12 0L1 15L12 30Z" fill="#333" />
            </Ic>
          </HArrow>
          <HThumb>|||</HThumb>
          <HArrow $width={151} $pad={20}>
            <Ic w={12} h={30}>
              <path d="M0 0L11 15L0 30Z" fill="#333" />
            </Ic>
          </HArrow>
        </HScroll>
        <StatusBar>
          <StatusCell $width={498}>
            <StatusIcon $width={30} viewBox="0 0 36 40">
              <path d="M15 2V38M2 20H28M15 2L10 8H20ZM15 38L10 32H20ZM2 20L8 15V25ZM28 20L22 15V25Z" stroke="#223" strokeWidth="2.4" fill="#223" />
            </StatusIcon>
            313, 117像素
          </StatusCell>
          <StatusCell $width={501} $pad={14}>
            <StatusIcon viewBox="0 0 36 40">
              <rect x="4" y="8" width="26" height="20" stroke="#223" strokeWidth="3" strokeDasharray="4 3" fill="none" />
              <path d="M4 2V8M4 32H30" stroke="#223" strokeWidth="3" />
            </StatusIcon>
          </StatusCell>
          <StatusCell $width={501} $pad={14}>
            <StatusIcon viewBox="0 0 36 40">
              <rect x="10" y="6" width="24" height="22" stroke="#223" strokeWidth="3" fill="none" />
              <path d="M4 2V28M10 36H34" stroke="#223" strokeWidth="3" />
            </StatusIcon>
            1359 × 549像素
          </StatusCell>
          <StatusCell $width={500} $pad={16} $gap={16}>
            <StatusIcon viewBox="0 0 36 40">
              <rect x="4" y="4" width="28" height="32" stroke="#234" strokeWidth="3" fill="none" />
              <rect x="10" y="4" width="16" height="10" fill="#234" />
              <rect x="10" y="22" width="16" height="14" stroke="#234" strokeWidth="2" fill="none" />
            </StatusIcon>
            大小: 3.4KB
          </StatusCell>
          <StatusCell $width={1285} />
          <StatusCell $width={555} $open $pad={50} $gap={0}>
            100%
            <ZoomRound $gap={24}>−</ZoomRound>
            <ZoomTrack>
              <ZoomThumb />
            </ZoomTrack>
            <ZoomRound $gap={34}>+</ZoomRound>
          </StatusCell>
        </StatusBar>
        <Taskbar>
          <TaskSlot $width={273} />
          <TaskSlot $width={269} />
          <TaskSlot $width={270} />
          <TaskSlot $width={268} />
          <TaskSlot $width={540} />
          <TaskSlot $width={270} />
          <TaskSlot $width={270} />
          <TaskSlot $width={266} />
        </Taskbar>
      </Window>
      <CutOff />
      <Orb />
      <DanmakuLayer>
        <Danmaku $x={-70} $y={58}>妙呀</Danmaku>
        <Danmaku $x={303} $y={58}>妙啊</Danmaku>
        <Danmaku $x={671} $y={58} $mono>niub</Danmaku>
        <Danmaku $x={1465} $y={58}>充数的</Danmaku>
        <Danmaku $x={2706} $y={58}>天才</Danmaku>
        <Danmaku $x={3597} $y={58} $red><Narrow $spacing={-6}>666</Narrow></Danmaku>
        <Danmaku $x={431} $y={151}>秒啊</Danmaku>
        <Danmaku $x={1768} $y={151}>这就是排序呗</Danmaku>
        <Danmaku $x={2383} $y={151} $word={18}><Narrow $spacing={-6}>200</Narrow> 掉了。。。</Danmaku>
        <Danmaku $x={3600} $y={151}>左根右</Danmaku>
        <Danmaku $x={220} $y={245}>太妙了</Danmaku>
        <Danmaku $x={908} $y={245} $word={27}>这是二叉查找树 并不是平衡二叉树<Dots>...</Dots></Danmaku>
        <Danmaku $x={3720} $y={245}>少女</Danmaku>
        <Danmaku $x={465} $y={340}>还是先学数据结构方便</Danmaku>
        <Danmaku $x={1727} $y={340}>还好我学过数据结构</Danmaku>
        <Danmaku $x={3805} $y={340}>吗</Danmaku>
        <Danmaku $x={453} $y={436}>少女</Danmaku>
        <Danmaku $x={2322} $y={436}>这里只能用递归思想吗</Danmaku>
        <Danmaku $x={-61} $y={531}>牛逼啊</Danmaku>
        <Danmaku $x={2829} $y={531}>厉害</Danmaku>
        <Danmaku $x={3808} $y={531}>秒</Danmaku>
      </DanmakuLayer>
    </Stage>
  );
}
